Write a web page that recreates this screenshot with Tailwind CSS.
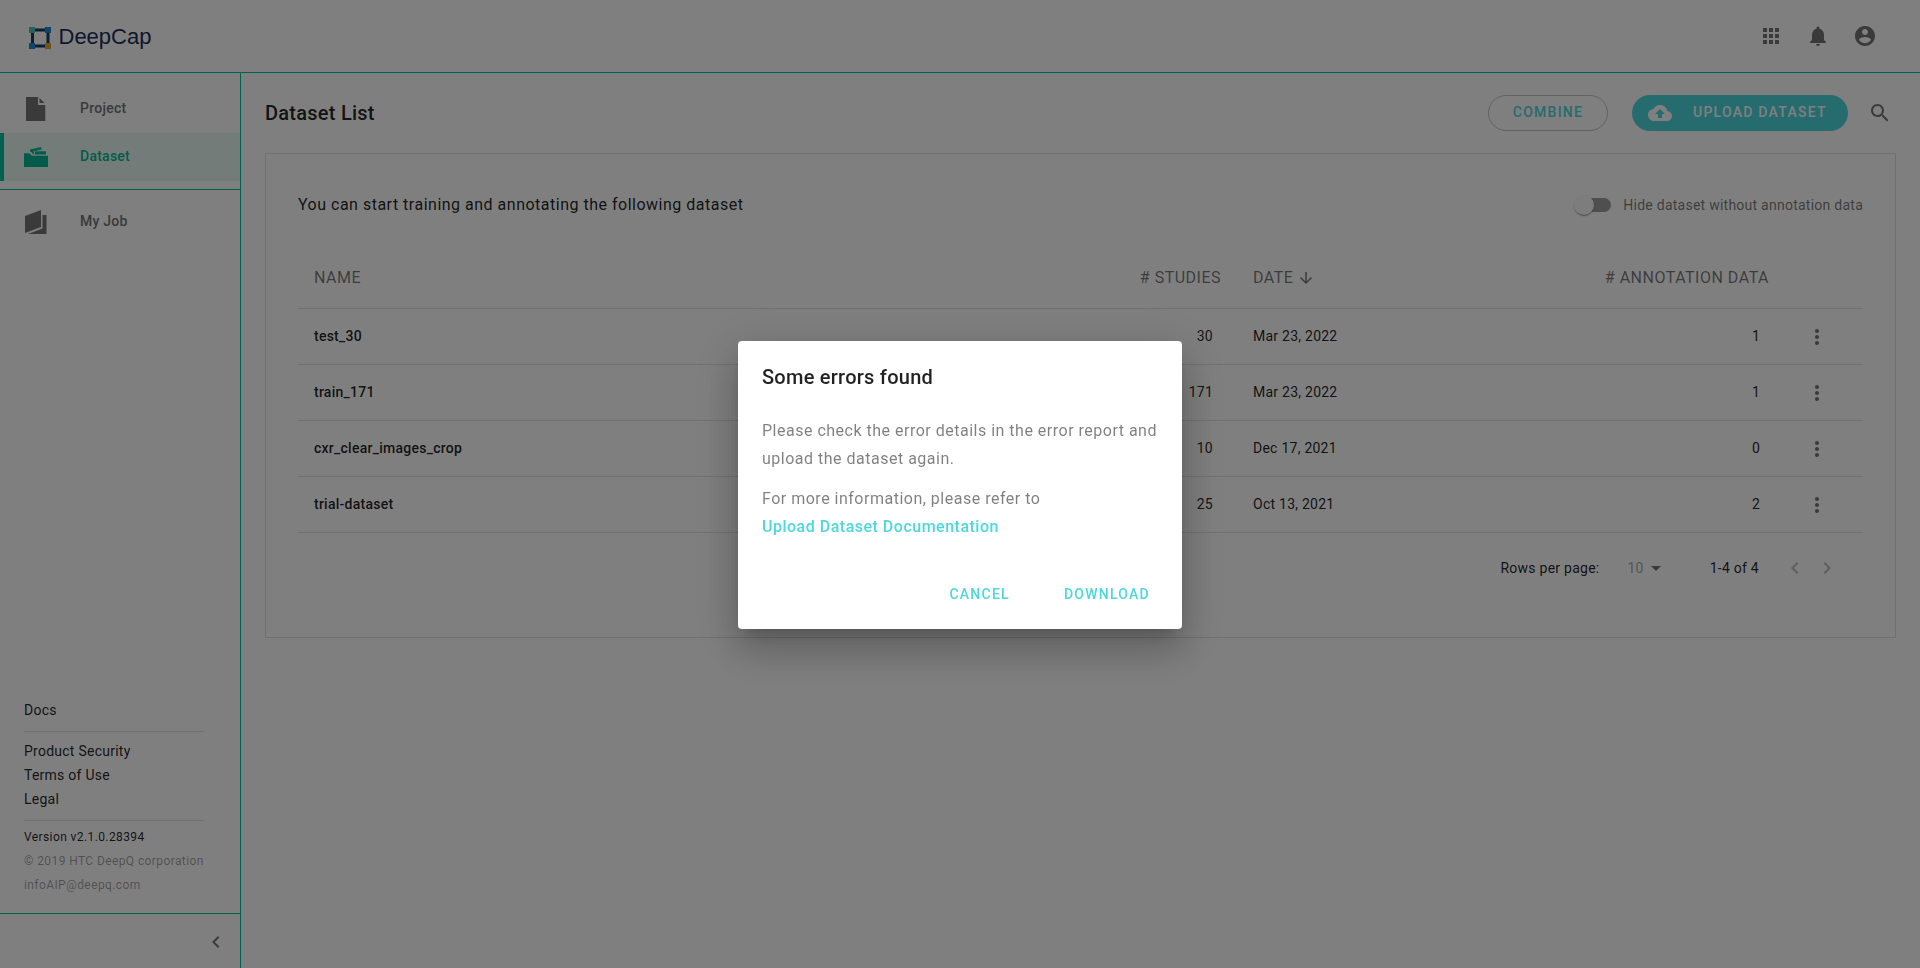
<!DOCTYPE html>
<html lang="en">
<head>
<meta charset="utf-8">
<title>DeepCap</title>
<script src="https://cdn.jsdelivr.net/npm/@tailwindcss/browser@4"></script>
</head>
<body class="h-screen overflow-hidden bg-white font-['Roboto',sans-serif] text-sm text-black/87">
<div class="flex h-screen flex-col">
  <header class="flex h-[73px] shrink-0 items-center justify-between border-b border-[#00c29c] pl-7 pr-[43px]">
    <div class="flex items-center gap-[6.500px]">
      <svg class="mt-1" width="24" height="24" viewBox="0 0 24 24">
        <path d="M4.500 4h15.500v16h-15.500z" fill="none" stroke="#14405f" stroke-width="3"/>
        <path d="M1 1h6v6H1z" fill="#4fc3c0"/><path d="M17 1h6v6h-6zM1 17h6v6H1z" fill="#1f8bd6"/><path d="M17 17h6v6h-6z" fill="#e0a93a"/>
      </svg>
      <span class="pt-0.5 font-['Liberation_Sans',sans-serif] text-[22px] leading-8 text-[#1a2f5c]">DeepCap</span>
    </div>
    <div class="flex items-center gap-[23px] text-[#757575]">
      <svg width="24" height="24" viewBox="0 0 24 24" fill="currentColor"><path d="M4 8h4V4H4v4zm6 12h4v-4h-4v4zm-6 0h4v-4H4v4zm0-6h4v-4H4v4zm6 0h4v-4h-4v4zm6-10v4h4V4h-4zm-6 4h4V4h-4v4zm6 6h4v-4h-4v4zm0 6h4v-4h-4v4z"/></svg>
      <svg width="24" height="24" viewBox="0 0 24 24" fill="currentColor"><path d="M12 22c1.100 0 2-.9 2-2h-4c0 1.100.89 2 2 2zm6-6v-5c0-3.070-1.640-5.640-4.500-6.320V4c0-.83-.67-1.500-1.500-1.500s-1.500.67-1.500 1.500v.68C7.630 5.360 6 7.920 6 11v5l-2 2v1h16v-1l-2-2z"/></svg>
      <svg width="24" height="24" viewBox="0 0 24 24" fill="currentColor"><path d="M12 2C6.480 2 2 6.480 2 12s4.480 10 10 10 10-4.480 10-10S17.520 2 12 2zm0 3c1.660 0 3 1.340 3 3s-1.340 3-3 3-3-1.340-3-3 1.340-3 3-3zm0 14.200c-2.500 0-4.710-1.280-6-3.220.03-1.990 4-3.080 6-3.080 1.990 0 5.970 1.090 6 3.080-1.290 1.940-3.500 3.220-6 3.220z"/></svg>
    </div>
  </header>

  <div class="flex min-h-0 flex-1">
    <aside class="flex w-[241px] shrink-0 flex-col border-r border-[#00c29c]">
      <nav class="pt-3 font-medium tracking-[0.25px] text-[#757575]">
        <a class="flex h-12 items-center pl-6">
          <svg width="24" height="24" viewBox="0 0 24 24" fill="currentColor"><path d="M2 0h12v8h7.300v16H2zM15.500 1l5 5h-5z"/></svg>
          <span class="ml-8 pb-0.5">Project</span>
        </a>
        <a class="flex h-12 items-center border-l-4 border-[#00c29c] bg-[#e9f9f4] pl-5 text-[#00b895]">
          <svg width="24" height="24" viewBox="0 0 24 24" fill="currentColor"><path d="M0 8.300h5.500c1 0 1 2.500 3 2.500H24V22H0zM6 4.600L17 2l.8 2.500-8 1.700V9.300C8 9.600 8.500 6.800 6 6.500zM11 6.300h11v3.200H11z"/></svg>
          <span class="ml-8 pb-0.5">Dataset</span>
        </a>
        <div class="mt-2 border-t border-[#00c29c] pt-2">
          <a class="flex h-12 items-center pl-6">
            <svg width="24" height="24" viewBox="0 0 24 24" fill="currentColor"><path d="M1 6L17 0v17L1 23zM18.500 5H22.500v19H4l14.500-5.500z"/></svg>
            <span class="ml-8 pb-0.5">My Job</span>
          </a>
        </div>
      </nav>
      <div class="mt-auto pl-6">
        <div class="w-[180px] leading-6 tracking-[0.25px]">
          <p class="pb-[9px]">Docs</p>
          <div class="border-y border-black/12 pt-[7px] pb-[9px]">
            <p>Product Security</p><p>Terms of Use</p><p>Legal</p>
          </div>
          <div class="whitespace-nowrap pt-1 pb-4 text-xs leading-6 tracking-[0.4px]">
            <p>Version v2.1.0.28394</p>
            <p class="text-black/38">© 2019 HTC DeepQ corporation</p>
            <p class="text-black/38">infoAIP@deepq.com</p>
          </div>
        </div>
      </div>
      <div class="flex h-[55px] items-center justify-end border-t border-[#00c29c] pr-3 text-[#757575]">
        <svg class="mt-0.5" width="24" height="24" viewBox="0 0 24 24" fill="currentColor"><path d="M15.410 7.410L14 6l-6 6 6 6 1.410-1.410L10.830 12z"/></svg>
      </div>
    </aside>

    <main class="flex-1 pl-6 pr-6">
      <div class="flex h-20 items-center">
        <h1 class="text-xl font-medium tracking-[0.25px]">Dataset List</h1>
        <button class="ml-auto h-9 w-[120px] rounded-full border border-black/23 pb-0.5 font-medium tracking-[1.250px] text-[#4dd8dc]">COMBINE</button>
        <button class="ml-6 flex h-9 w-[216px] items-center rounded-full bg-[#4dd8dc] pl-4 font-medium tracking-[1.250px] text-white">
          <svg width="24" height="24" viewBox="0 0 24 24" fill="currentColor"><path d="M19.350 10.040C18.670 6.590 15.640 4 12 4 9.110 4 6.600 5.640 5.350 8.040 2.340 8.360 0 10.910 0 14c0 3.310 2.690 6 6 6h13c2.760 0 5-2.240 5-5 0-2.640-2.050-4.780-4.650-4.960zM14 13v4h-4v-4H7l5-5 5 5h-3z"/></svg>
          <span class="ml-[21px] pb-0.5">UPLOAD DATASET</span>
        </button>
        <svg class="ml-5 mr-1" width="24" height="24" viewBox="0 0 24 24" fill="#757575"><path d="M15.500 14h-.79l-.28-.27C15.410 12.590 16 11.110 16 9.500 16 5.910 13.090 3 9.500 3S3 5.910 3 9.500 5.910 16 9.500 16c1.610 0 3.090-.59 4.230-1.570l.27.28v.79l5 4.990L20.490 19l-4.990-5zm-6 0C7.010 14 5 11.990 5 9.500S7.010 5 9.500 5 14 7.010 14 9.500 11.990 14 9.500 14z"/></svg>
      </div>

      <section class="h-[485px] w-[1631px] border border-black/12 px-8">
        <div class="flex h-[102px] items-center justify-between">
          <p class="text-base tracking-[0.5px]">You can start training and annotating the following dataset</p>
          <label class="flex items-center text-black/54">
            <span class="mr-3 flex h-[14px] w-[34px] items-center rounded-full bg-[#9e9e9e]"><span class="-ml-[3px] size-5 shrink-0 rounded-full bg-[#fafafa] shadow-[0_2px_1px_-1px_rgba(0,0,0,0.2),0_1px_1px_0_rgba(0,0,0,0.14),0_1px_3px_0_rgba(0,0,0,0.12)]"></span></span>
            <span class="pb-px tracking-[0.25px]">Hide dataset without annotation data</span>
          </label>
        </div>
        <table class="w-full table-fixed tracking-[0.25px]">
          <colgroup><col class="w-[600px]"><col class="w-[339px]"><col class="w-[240px]"><col class="w-[307px]"><col class="w-[79px]"></colgroup>
          <thead>
            <tr class="h-[52px] border-b border-black/12 text-base tracking-[0.5px] text-black/54">
              <th class="pb-2 pl-4 text-left font-normal">NAME</th>
              <th class="pr-4 pb-2 text-right font-normal">#&nbsp;STUDIES</th>
              <th class="pb-2 pl-4 text-left font-normal"><span class="flex items-center gap-1">DATE <svg width="18" height="18" viewBox="0 0 24 24" fill="currentColor"><path d="M20 12l-1.410-1.410L13 16.170V4h-2v12.170l-5.580-5.590L4 12l8 8 8-8z"/></svg></span></th>
              <th class="pr-[15px] pb-2 text-right font-normal"># ANNOTATION DATA</th>
              <th></th>
            </tr>
          </thead>
          <tbody id="rows"></tbody>
        </table>
        <div class="flex h-[70px] items-center justify-end pr-6 tracking-[0.25px]">
          <span>Rows per page:</span>
          <span class="ml-7 text-black/38">10</span>
          <svg width="24" height="24" viewBox="0 0 24 24" fill="#757575"><path d="M7 10l5 5 5-5z"/></svg>
          <span class="ml-[42px]">1-4 of 4</span>
          <svg class="ml-6" width="24" height="24" viewBox="0 0 24 24" fill="#bdbdbd"><path d="M15.410 7.410L14 6l-6 6 6 6 1.410-1.410L10.830 12z"/></svg>
          <svg class="ml-2" width="24" height="24" viewBox="0 0 24 24" fill="#bdbdbd"><path d="M10 6L8.590 7.410 13.170 12l-4.580 4.590L10 18l6-6z"/></svg>
        </div>
      </section>
    </main>
  </div>
</div>

<div class="fixed inset-0 flex items-center justify-center bg-black/50">
  <div class="mt-0.5 h-[288px] w-[444px] rounded bg-white px-6 shadow-[0_11px_15px_-7px_rgba(0,0,0,0.2),0_24px_38px_3px_rgba(0,0,0,0.14),0_9px_46px_8px_rgba(0,0,0,0.12)]">
    <h2 class="pt-5 text-xl leading-8 font-medium tracking-[0.25px]">Some errors found</h2>
    <div class="mt-6 whitespace-nowrap text-base leading-7 tracking-[0.5px] text-black/50">
      <p>Please check the error details in the error report and<br>upload the dataset again.</p>
      <p class="mt-3">For more information, please refer to<br><a class="font-medium text-[#4dd8dc]">Upload Dataset Documentation</a></p>
    </div>
    <div class="mt-[35px] flex h-9 items-center justify-end gap-[54px] pr-2 font-medium tracking-[1.250px] text-[#4dd8dc]">
      <button>CANCEL</button><button>DOWNLOAD</button>
    </div>
  </div>
</div>

<script>
const rows = [['test_30', 30, 'Mar 23, 2022', 1], ['train_171', 171, 'Mar 23, 2022', 1], ['cxr_clear_images_crop', 10, 'Dec 17, 2021', 0], ['trial-dataset', 25, 'Oct 13, 2021', 2]];
document.getElementById('rows').innerHTML = rows.map(r => `
  <tr class="h-14 border-b border-black/12">
    <td class="pl-4 font-medium">${r[0]}</td>
    <td class="pr-6 text-right">${r[1]}</td>
    <td class="pl-4">${r[2]}</td>
    <td class="pr-6 text-right">${r[3]}</td>
    <td class="pt-px pl-[21px]"><svg width="24" height="24" viewBox="0 0 24 24" fill="#757575"><path d="M12 8c1.100 0 2-.9 2-2s-.9-2-2-2-2 .9-2 2 .9 2 2 2zm0 2c-1.100 0-2 .9-2 2s.9 2 2 2 2-.9 2-2-.9-2-2-2zm0 6c-1.100 0-2 .9-2 2s.9 2 2 2 2-.9 2-2-.9-2-2-2z"/></svg></td>
  </tr>`).join('');
</script>
</body>
</html>
